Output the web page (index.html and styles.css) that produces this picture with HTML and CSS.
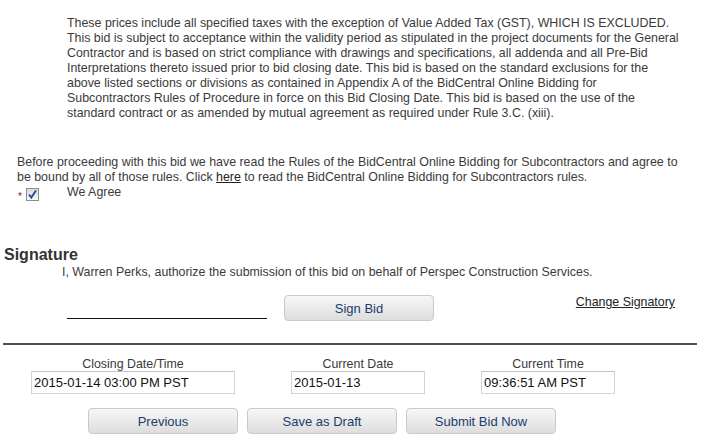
FILE: index.html
```html
<!DOCTYPE html>
<html>
<head>
<meta charset="utf-8">
<link rel="stylesheet" href="styles.css">
</head>
<body>
<div class="page">
  <p class="terms">These prices include all specified taxes with the exception of Value Added Tax (GST), WHICH IS EXCLUDED.<br>This bid is subject to acceptance within the validity period as stipulated in the project documents for the General<br>Contractor and is based on strict compliance with drawings and specifications, all addenda and all Pre-Bid<br>Interpretations thereto issued prior to bid closing date. This bid is based on the standard exclusions for the<br>above listed sections or divisions as contained in Appendix A of the BidCentral Online Bidding for<br>Subcontractors Rules of Procedure in force on this Bid Closing Date. This bid is based on the use of the<br>standard contract or as amended by mutual agreement as required under Rule 3.C. (xiii).</p>

  <p class="rules">Before proceeding with this bid we have read the Rules of the BidCentral Online Bidding for Subcontractors and agree to<br>be bound by all of those rules. Click <a class="link" href="#">here</a> to read the BidCentral Online Bidding for Subcontractors rules.</p>

  <div class="agree">
    <span class="req">*</span>
    <span class="check"><svg width="11" height="11" viewBox="0 0 11 11"><path d="M2 5.5 L4.3 8.5 L9 1.5" fill="none" stroke="#2a4fa0" stroke-width="2"/></svg></span>
    <span class="agree-label">We Agree</span>
  </div>

  <h2 class="sig-title">Signature</h2>
  <p class="auth">I, Warren Perks, authorize the submission of this bid on behalf of Perspec Construction Services.</p>

  <div class="sign-row">
    <div class="sig-line"></div>
    <button class="btn">Sign Bid</button>
    <a class="change" href="#">Change Signatory</a>
  </div>

  <hr class="rule">

  <div class="times">
    <div class="field wide">
      <div class="field-label">Closing Date/Time</div>
      <input class="field-input" type="text" value="2015-01-14 03:00 PM PST">
    </div>
    <div class="field">
      <div class="field-label">Current Date</div>
      <input class="field-input" type="text" value="2015-01-13">
    </div>
    <div class="field">
      <div class="field-label">Current Time</div>
      <input class="field-input" type="text" value="09:36:51 AM PST">
    </div>
  </div>

  <div class="actions">
    <button class="btn">Previous</button>
    <button class="btn">Save as Draft</button>
    <button class="btn">Submit Bid Now</button>
  </div>
</div>
</body>
</html>
```
FILE: styles.css
```css
html, body {
  margin: 0;
  padding: 0;
  background: #ffffff;
}
body {
  font-family: "Liberation Sans", Arial, sans-serif;
  font-size: 12.4px;
  color: #3a3a3a;
}
.page {
  width: 715px;
  padding-top: 16px;
}
.terms {
  margin: 0 0 0 67px;
  line-height: 15px;
  white-space: nowrap;
}
.rules {
  margin: 34px 0 0 17px;
  line-height: 15px;
  white-space: nowrap;
}
.link {
  color: #222;
  text-decoration: underline;
}
.agree {
  display: flex;
  align-items: flex-start;
  margin: 1px 0 0 18px;
  height: 16px;
}
.req {
  color: #8b1a1a;
  font-size: 10px;
  line-height: 10px;
  margin-top: 6px;
  width: 8px;
}
.check {
  box-sizing: border-box;
  width: 13px;
  height: 13px;
  margin-top: 2px;
  border: 1px solid #8c8c8c;
  background: linear-gradient(#dcdcdc, #f6f6f6);
  display: flex;
  align-items: center;
  justify-content: center;
}
.agree-label {
  margin-left: 28px;
  line-height: 12px;
}
.sig-title {
  margin: 44px 0 0 4px;
  font-size: 16px;
  line-height: 18px;
  font-weight: bold;
  color: #333;
}
.auth {
  margin: 1px 0 0 62px;
  line-height: 15px;
}
.sign-row {
  display: flex;
  align-items: flex-start;
  margin: 15px 0 0 67px;
  height: 26px;
}
.sig-line {
  width: 200px;
  height: 23px;
  border-bottom: 1px solid #111;
}
.btn {
  box-sizing: border-box;
  width: 150px;
  height: 26px;
  border: 1px solid #c9c9c9;
  border-radius: 4px;
  background: linear-gradient(#f7f7f7, #dddddd);
  font-family: "Liberation Sans", Arial, sans-serif;
  font-size: 13px;
  color: #1c3d6b;
  padding: 0;
  cursor: pointer;
}
.sign-row .btn {
  margin-left: 17px;
}
.change {
  margin-left: auto;
  margin-right: 40px;
  margin-top: 1px;
  color: #222;
  text-decoration: underline;
  line-height: 12px;
}
.rule {
  margin: 22px 0 0 3px;
  width: 694px;
  height: 2px;
  border: 0;
  background: #45524e;
}
.times {
  display: flex;
  gap: 56px;
  margin: 12px 0 0 31px;
}
.field {
  display: flex;
  flex-direction: column;
  align-items: center;
  width: 134px;
}
.field.wide {
  width: 204px;
}
.field-label {
  font-size: 12.4px;
  line-height: 14px;
}
.field-input {
  box-sizing: border-box;
  width: 100%;
  height: 23px;
  border: 1px solid #d3d3d3;
  border-top-color: #c4c4c4;
  padding: 0 2px;
  font-family: "Liberation Sans", Arial, sans-serif;
  font-size: 13px;
  color: #111;
  background: #fff;
}
.actions {
  display: flex;
  gap: 9px;
  margin: 14px 0 0 88px;
}
```
